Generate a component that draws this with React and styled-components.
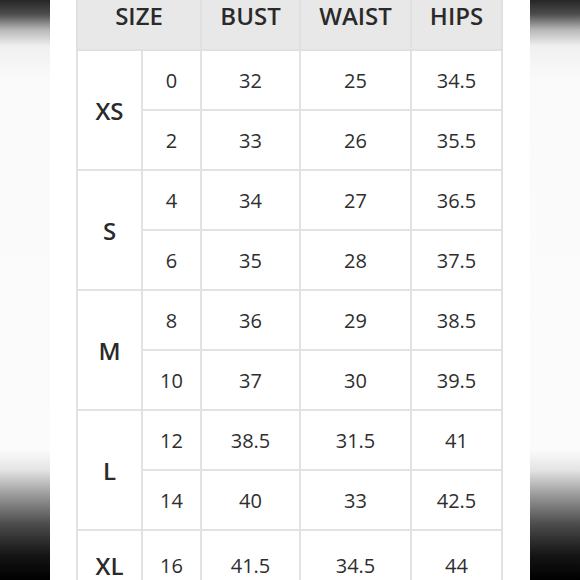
import React from 'react';
import styled, { createGlobalStyle } from 'styled-components';

const GlobalStyle = createGlobalStyle`
  html, body {
    margin: 0;
    padding: 0;
    background: #ffffff;
  }
`;

const PageWrapper = styled('div')`
  width: 580px;
  height: 580px;
  overflow: hidden;
  display: flex;
  flex-direction: row;
  font-family: "Open Sans", "DejaVu Sans", sans-serif;
  color: #2e2e2e;
`;

const SideBand = styled('div')`
  width: 50px;
  flex-shrink: 0;
  background: linear-gradient(
    to bottom,
    #262626 0px,
    #4c4c4c 14px,
    #b8b8b8 30px,
    #f0f0f0 46px,
    #fafafa 80px,
    #fbfbfb 450px,
    #e4e4e4 470px,
    #9a9a9a 495px,
    #4a4a4a 525px,
    #151515 555px,
    #000000 580px
  );
`;

const CenterWrapper = styled('div')`
  flex: 1;
  background: #ffffff;
  padding-left: 26px;
`;

const ChartTable = styled('table')`
  border-collapse: collapse;
  table-layout: fixed;
  width: 425px;
`;

const HeadCell = styled('th')`
  height: 49px;
  padding: 0;
  background: #e8e8e8;
  border: 2px solid #e0e0e0;
  border-top: none;
  vertical-align: top;
  font-size: 24px;
  font-weight: 600;
  line-height: 32px;
  color: #2a2a2a;
  text-align: center;
`;

const SizeCell = styled('td')`
  padding: 0;
  border: 2px solid #e2e2e2;
  text-align: center;
  vertical-align: middle;
  font-size: 24px;
  font-weight: 600;
  color: #2a2a2a;
`;

const NumCell = styled('td')`
  height: ${(p) => (p.$tall ? '68px' : '58px')};
  padding: 0;
  border: 2px solid #e2e2e2;
  text-align: center;
  vertical-align: middle;
  font-size: 20px;
  font-weight: 400;
  color: #2e2e2e;
`;

const rows = [
  { size: 'XS', items: [['0', '32', '25', '34.5'], ['2', '33', '26', '35.5']] },
  { size: 'S', items: [['4', '34', '27', '36.5'], ['6', '35', '28', '37.5']] },
  { size: 'M', items: [['8', '36', '29', '38.5'], ['10', '37', '30', '39.5']] },
  { size: 'L', items: [['12', '38.5', '31.5', '41'], ['14', '40', '33', '42.5']] },
  { size: 'XL', items: [['16', '41.5', '34.5', '44']], tall: true },
];

class App extends React.Component {
  render() {
    return (
      <PageWrapper>
        <GlobalStyle />
        <SideBand />
        <CenterWrapper>
          <ChartTable>
            <colgroup>
              <col style={{ width: 65 }} />
              <col style={{ width: 59 }} />
              <col style={{ width: 99 }} />
              <col style={{ width: 111 }} />
              <col style={{ width: 91 }} />
            </colgroup>
            <thead>
              <tr>
                <HeadCell colSpan={2}>SIZE</HeadCell>
                <HeadCell>BUST</HeadCell>
                <HeadCell>WAIST</HeadCell>
                <HeadCell>HIPS</HeadCell>
              </tr>
            </thead>
            <tbody>
              {rows.map((group) =>
                group.items.map((item, i) => (
                  <tr key={group.size + i}>
                    {i === 0 && (
                      <SizeCell rowSpan={group.items.length}>{group.size}</SizeCell>
                    )}
                    {item.map((v, j) => (
                      <NumCell key={j} $tall={group.tall}>{v}</NumCell>
                    ))}
                  </tr>
                ))
              )}
            </tbody>
          </ChartTable>
        </CenterWrapper>
        <SideBand />
      </PageWrapper>
    );
  }
}

export default App;
